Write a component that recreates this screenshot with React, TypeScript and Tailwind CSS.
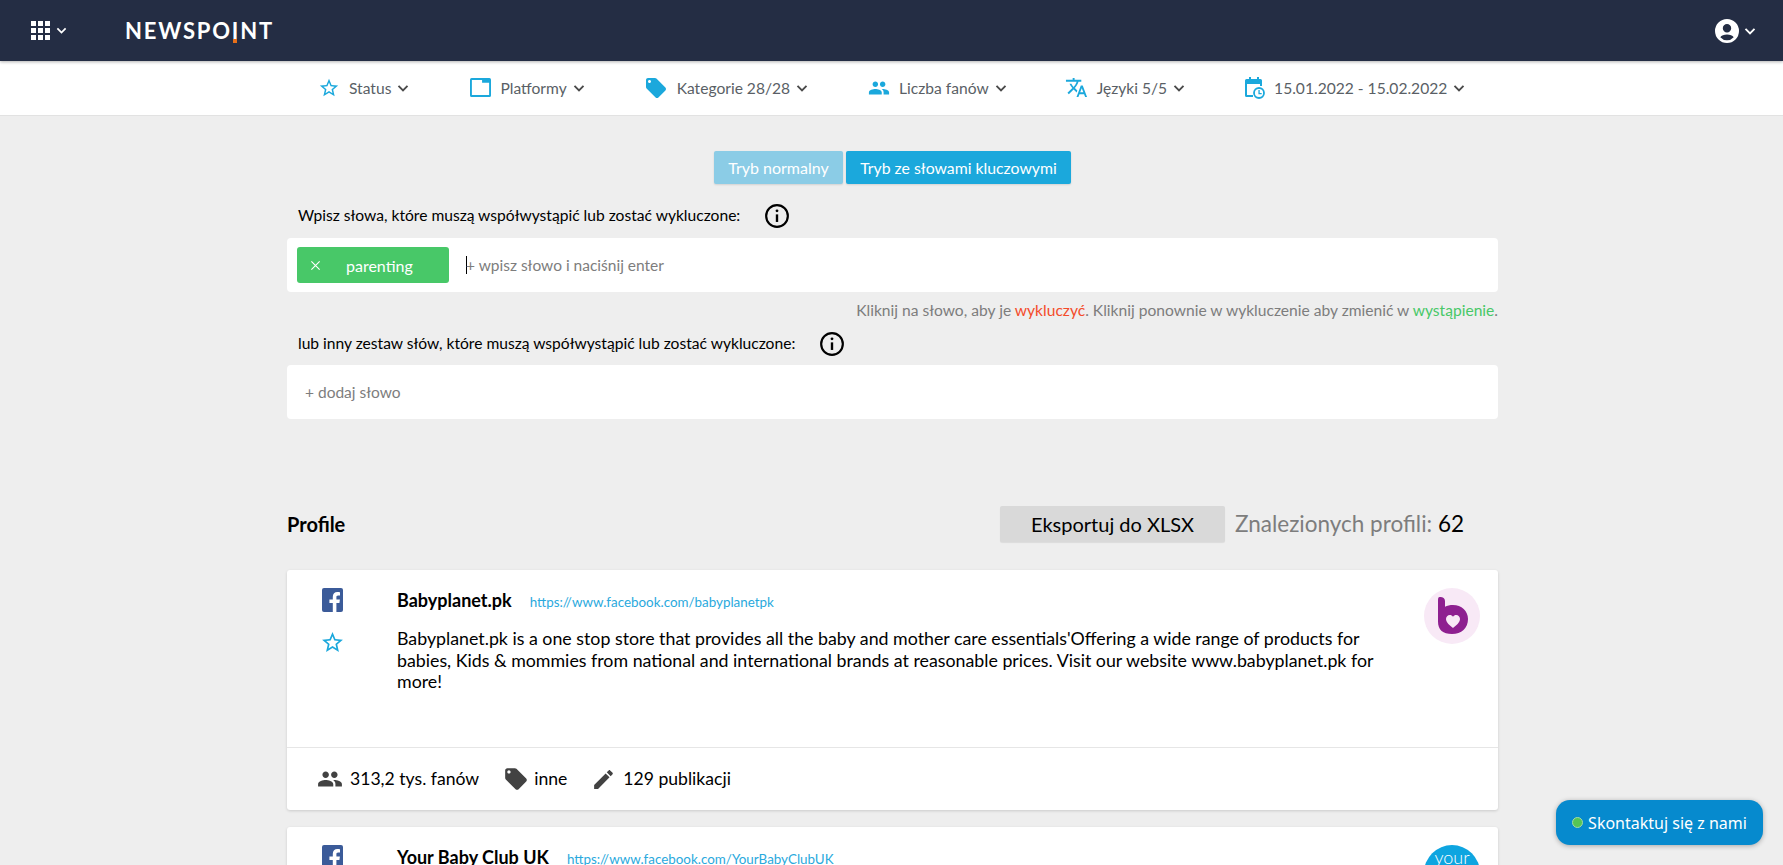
const peoplePath = 'M16 11c1.66 0 2.99-1.34 2.99-3S17.66 5 16 5c-1.66 0-3 1.34-3 3s1.34 3 3 3zm-8 0c1.66 0 2.99-1.34 2.99-3S9.66 5 8 5C6.34 5 5 6.34 5 8s1.34 3 3 3zm0 2c-2.33 0-7 1.17-7 3.5V19h14v-2.5c0-2.33-4.67-3.5-7-3.5zm8 0c-.29 0-.62.02-.97.05 1.16.84 1.97 1.97 1.97 3.45V19h6v-2.5c0-2.33-4.67-3.5-7-3.5z';
const tagPath = 'M21.41 11.58l-9-9C12.05 2.22 11.55 2 11 2H4c-1.1 0-2 .9-2 2v7c0 .55.22 1.05.59 1.42l9 9c.36.36.86.58 1.41.58.55 0 1.05-.22 1.41-.59l7-7c.37-.36.59-.86.59-1.41 0-.55-.23-1.06-.59-1.42zM5.5 7C4.67 7 4 6.33 4 5.5S4.67 4 5.5 4 7 4.67 7 5.5 6.33 7 5.5 7z';
const starPath = 'M22 9.24l-7.19-.62L12 2 9.19 8.63 2 9.24l5.46 4.73L5.82 21 12 17.27 18.18 21l-1.63-7.03L22 9.24zM12 15.4l-3.76 2.27 1-4.28-3.32-2.88 4.38-.38L12 6.1l1.71 4.04 4.38.38-3.32 2.88 1 4.28L12 15.4z';
const translatePath = 'M12.87 15.07l-2.54-2.51.03-.03c1.74-1.94 2.98-4.17 3.71-6.53H17V4h-7V2H8v2H1v1.99h11.17C11.5 7.92 10.44 9.75 9 11.35 8.07 10.32 7.3 9.19 6.69 8h-2c.73 1.63 1.73 3.17 2.98 4.56l-5.09 5.02L4 19l5-5 3.11 3.11.76-2.04zM18.5 10h-2L12 22h2l1.12-3h4.75L21 22h2l-4.5-12zm-2.62 7l1.62-4.33L19.12 17h-3.24z';
const editPath = 'M3 17.25V21h3.75L17.81 9.94l-3.75-3.75L3 17.25zM20.71 7.04c.39-.39.39-1.02 0-1.41l-2.34-2.34c-.39-.39-1.02-.39-1.41 0l-1.83 1.83 3.75 3.75 1.83-1.83z';

const Icon = ({ d, className }: { d: string; className: string }) => (
  <svg viewBox="0 0 24 24" fill="currentColor" className={className}>
    <path d={d} />
  </svg>
);

const Chevron = ({ className = 'w-[12px] h-[12px] text-[#4a4a4a]' }: { className?: string }) => (
  <svg viewBox="0 0 12 12" fill="none" stroke="currentColor" strokeWidth="1.9" className={className}>
    <path d="M1.5 3.8 6 8.3l4.5-4.5" />
  </svg>
);

const WindowIcon = () => (
  <svg viewBox="0 0 20 18" className="w-[21px] h-[19px] text-[#1ba8dc]" fill="currentColor">
    <path fillRule="evenodd" d="M1.5 0h17A1.5 1.5 0 0 1 20 1.5v15a1.5 1.5 0 0 1-1.5 1.5h-17A1.5 1.5 0 0 1 0 16.5v-15A1.5 1.5 0 0 1 1.5 0ZM1.8 1.8v14.4h16.4V4.4H11.5V1.8H1.8Z" />
  </svg>
);

const CalendarClock = () => (
  <svg viewBox="0 0 20 22" className="w-[20px] h-[22px] text-[#1ba8dc]" fill="currentColor">
    <path fillRule="evenodd" d="M4 0h2v2h6V0h2v2h1.5A1.5 1.5 0 0 1 17 3.5V9h-2V7H2v11h6v2H1.5A1.5 1.5 0 0 1 0 18.5v-15A1.5 1.5 0 0 1 1.5 2H4V0Z" />
    <circle cx="14" cy="16" r="5" fill="none" stroke="currentColor" strokeWidth="1.8" />
    <path d="M13.4 13h1.3v3h2v1.2h-3.3V13Z" />
  </svg>
);

const InfoIcon = () => (
  <svg viewBox="0 0 24 24" className="w-[26px] h-[26px] text-black" fill="none" stroke="currentColor">
    <circle cx="12" cy="12" r="10" strokeWidth="2" />
    <path d="M12 10.5V17.5" strokeWidth="2.2" />
    <circle cx="12" cy="7.2" r="1.3" fill="currentColor" stroke="none" />
  </svg>
);

const FacebookIcon = () => (
  <svg viewBox="0 0 21 24" className="w-[23px] h-[24px]">
    <rect width="21" height="24" rx="2" fill="#3b5b99" />
    <path fill="#fff" d="M14.4 24v-9h3l.5-3.6h-3.5V9.2c0-1 .3-1.8 1.8-1.8h1.8V4.2c-.4 0-1.5-.2-2.7-.2-2.7 0-4.5 1.7-4.5 4.7v2.7H7.4V15h3.4v9h3.6Z" />
  </svg>
);

const FilterItem = ({ icon, label }: { icon: React.ReactNode; label: string }) => (
  <div className="flex items-center">
    <span className="flex items-center justify-center">{icon}</span>
    <span className="ml-[9px] pt-[2px] text-[#5a5f66] text-[15.6px]">{label}</span>
    <Chevron className="ml-[6px] mt-[1px] w-[12px] h-[12px] text-[#4a4a4a]" />
  </div>
);

const Stat = ({ d, label, iconClass }: { d: string; label: string; iconClass: string }) => (
  <div className="flex items-center">
    <Icon d={d} className={iconClass} />
    <span className="text-[17.6px] text-black">{label}</span>
  </div>
);

export default function App() {
  return (
    <div className="h-[865px] overflow-hidden bg-[#eeeeee] relative font-['Lato',sans-serif]">
      <header className="h-[61px] bg-[#242d44] flex items-center justify-between pl-[31px] pr-[27px] shadow-[0_1px_3px_rgba(0,0,0,0.3)] relative z-10">
        <div className="flex items-center">
          <div className="grid grid-cols-3 gap-[1.5px] w-[19px]">
            {Array.from({ length: 9 }).map((_, i) => (
              <span key={i} className="w-[5px] h-[5.5px] bg-white" />
            ))}
          </div>
          <Chevron className="ml-[6px] w-[11px] h-[11px] text-white" />
          <div className="ml-[58px] text-white text-[22px] tracking-[1.8px] leading-none font-bold">
            NEWSPO<span className="relative">I<span className="absolute left-[1px] bottom-[1px] w-[4px] h-[4px] bg-[#e8701a]" /></span>NT
          </div>
        </div>
        <div className="flex items-center">
          <svg viewBox="0 0 24 24" className="w-[24px] h-[24px] text-white" fill="currentColor">
            <path fillRule="evenodd" d="M12 0a12 12 0 1 1 0 24 12 12 0 0 1 0-24Zm0 5a4.2 4.2 0 1 0 0 8.4A4.2 4.2 0 0 0 12 5Zm0 10.5c-3 0-5.6 1-6.7 2.8a8.9 8.9 0 0 0 13.4 0c-1.1-1.8-3.7-2.8-6.7-2.8Z" />
          </svg>
          <Chevron className="ml-[5px] w-[12px] h-[12px] text-white" />
        </div>
      </header>

      <nav className="h-[55px] bg-white border-b border-[#e2e2e2] flex items-center pl-[318px]">
        <FilterItem icon={<Icon d={starPath} className="w-[22px] h-[22px] text-[#1ba8dc]" />} label="Status" />
        <div className="ml-[61px]"><FilterItem icon={<WindowIcon />} label="Platformy" /></div>
        <div className="ml-[59px]"><FilterItem icon={<Icon d={tagPath} className="w-[24px] h-[24px] text-[#1ba8dc]" />} label="Kategorie 28/28" /></div>
        <div className="ml-[60px]"><FilterItem icon={<Icon d={peoplePath} className="w-[22px] h-[22px] text-[#1ba8dc]" />} label="Liczba fanów" /></div>
        <div className="ml-[58px]"><FilterItem icon={<Icon d={translatePath} className="w-[23px] h-[23px] text-[#1ba8dc]" />} label="Języki 5/5" /></div>
        <div className="ml-[60px]"><FilterItem icon={<CalendarClock />} label="15.01.2022 - 15.02.2022" /></div>
      </nav>

      <main className="w-[1211px] ml-[287px]">
        <div className="flex justify-center gap-[3px] pt-[35px]">
          <button className="h-[33px] w-[129px] rounded-[2px] bg-[#8bcce6] text-white text-[16px] shadow-[0_1px_2px_rgba(0,0,0,0.12)]">Tryb normalny</button>
          <button className="h-[33px] w-[225px] rounded-[2px] bg-[#1ba8dc] text-white text-[15.8px] shadow-[0_1px_2px_rgba(0,0,0,0.12)]">Tryb ze słowami kluczowymi</button>
        </div>

        <div className="flex items-center h-[24px] mt-[20px] pl-[11px]">
          <span className="text-[15.6px] text-black">Wpisz słowa, które muszą współwystąpić lub zostać wykluczone:</span>
          <span className="ml-[24px]"><InfoIcon /></span>
        </div>

        <div className="h-[54px] mt-[10px] bg-white rounded-[4px] flex items-center pl-[10px]">
          <div className="h-[36px] w-[152px] rounded-[3px] bg-[#48c868] flex items-center text-white">
            <svg viewBox="0 0 12 12" className="ml-[13px] w-[11px] h-[11px]" fill="none" stroke="currentColor" strokeWidth="1.2">
              <path d="M1.5 1.5l9 9M10.5 1.5l-9 9" />
            </svg>
            <span className="ml-[25px] pt-[1px] text-[16px]">parenting</span>
          </div>
          <span className="ml-[17px] w-px h-[18px] bg-black" />
          <span className="text-[15.5px] pt-[1px] text-[#7d7d7d] -ml-px">+ wpisz słowo i naciśnij enter</span>
        </div>

        <p className="mt-[9px] text-right text-[15.6px] leading-[19px] text-[#7d7d7d]">
          Kliknij na słowo, aby je <span className="text-[#f44b2a]">wykluczyć</span>. Kliknij ponownie w wykluczenie aby zmienić w <span className="text-[#48c868]">wystąpienie</span>.
        </p>

        <div className="flex items-center h-[24px] mt-[12px] pl-[11px]">
          <span className="text-[15.6px] text-black">lub inny zestaw słów, które muszą współwystąpić lub zostać wykluczone:</span>
          <span className="ml-[24px]"><InfoIcon /></span>
        </div>

        <div className="h-[54px] mt-[9px] bg-white rounded-[4px] flex items-center pl-[18px]">
          <span className="text-[15.5px] pt-[1px] text-[#7d7d7d]">+ dodaj słowo</span>
        </div>

        <div className="flex items-center h-[36px] mt-[87px]">
          <h2 className="w-[713px] text-[20px] font-bold text-black">Profile</h2>
          <button className="h-[36px] w-[225px] rounded-[2px] bg-[#d9d9d9] text-[20px] text-black shadow-[0_1px_1px_rgba(0,0,0,0.08)]">Eksportuj do XLSX</button>
          <span className="ml-[10px] text-[22.5px] text-[#7d7d7d] whitespace-nowrap">Znalezionych profili: <span className="text-black">62</span></span>
        </div>

        <article className="mt-[28px] h-[240px] bg-white rounded-[3px] shadow-[0_1px_3px_rgba(0,0,0,0.15)]">
          <div className="h-[178px] flex border-b border-[#e6e6e6]">
            <div className="w-[110px] pl-[34px] pt-[18px] shrink-0">
              <FacebookIcon />
              <Icon d={starPath} className="mt-[18px] -ml-[1px] w-[25px] h-[25px] text-[#1ba8dc]" />
            </div>
            <div className="w-[1000px] pt-[17px]">
              <div className="flex items-baseline">
                <span className="text-[18px] font-bold text-black">Babyplanet.pk</span>
                <span className="ml-[18px] text-[13.4px] text-[#2aa9dd]">https://www.facebook.com/babyplanetpk</span>
              </div>
              <p className="mt-[14px] w-[990px] text-[17.8px] leading-[21.5px] text-black">
                Babyplanet.pk is a one stop store that provides all the baby and mother care essentials'Offering a wide range of products for babies, Kids &amp; mommies from national and international brands at reasonable prices. Visit our website www.babyplanet.pk for more!
              </p>
            </div>
            <div className="ml-auto mr-[18px] mt-[18px]">
              <svg viewBox="0 0 56 56" className="w-[56px] h-[56px]">
                <circle cx="28" cy="28" r="28" fill="#f8e9f6" />
                <path fill="#8e2090" d="M14.5 9.5c3-1.2 6.5.5 6.5 3.5v5.8c2.2-1.2 5-1.8 8-1.8 8.5 0 15 6 15 14 0 9-6.5 15-16 15-9 0-14-4-14-12.5V14c0-2 0-3.7.5-4.5Z" />
                <path fill="#f8e9f6" d="M29 40c-3-2.5-7-5.3-7-9 0-2.3 1.7-4 3.8-4 1.3 0 2.5.6 3.2 1.7.7-1.1 1.9-1.7 3.2-1.7 2.1 0 3.8 1.7 3.8 4 0 3.7-4 6.5-7 9Z" />
              </svg>
            </div>
          </div>
          <div className="h-[61px] flex items-center pl-[30px] pt-[2px]">
            <Stat d={peoplePath} label="313,2 tys. fanów" iconClass="w-[26px] h-[26px] text-[#424242] mr-[7px]" />
            <div className="ml-[24px]"><Stat d={tagPath} label="inne" iconClass="w-[26px] h-[26px] text-[#424242] mr-[5px]" /></div>
            <div className="ml-[24px]"><Stat d={editPath} label="129 publikacji" iconClass="w-[25px] h-[25px] text-[#424242] mr-[7px]" /></div>
          </div>
        </article>

        <article className="mt-[17px] h-[240px] bg-white rounded-[3px] shadow-[0_1px_3px_rgba(0,0,0,0.15)] flex">
          <div className="w-[110px] pl-[34px] pt-[18px] shrink-0">
            <FacebookIcon />
          </div>
          <div className="pt-[17px]">
            <div className="flex items-baseline">
              <span className="text-[18px] font-bold text-black">Your Baby Club UK</span>
              <span className="ml-[18px] text-[13.4px] text-[#2aa9dd]">https://www.facebook.com/YourBabyClubUK</span>
            </div>
          </div>
          <div className="ml-auto mr-[18px] mt-[18px] w-[56px] h-[56px] rounded-full bg-[#0ea5e0] text-white text-[18px] font-light text-center leading-none pt-[3px]">your</div>
        </article>
      </main>

      <button className="absolute left-[1556px] top-[800px] w-[207px] h-[45px] rounded-[14px] bg-[#068ace] text-white text-[16px] flex items-center justify-center font-['Noto_Sans',sans-serif] shadow-[0_1px_5px_rgba(0,0,0,0.3)]">
        <span className="w-[11px] h-[11px] rounded-full bg-[#55c555] border border-[#a5dca5] mr-[5px]" />
        Skontaktuj się z nami
      </button>
    </div>
  );
}
